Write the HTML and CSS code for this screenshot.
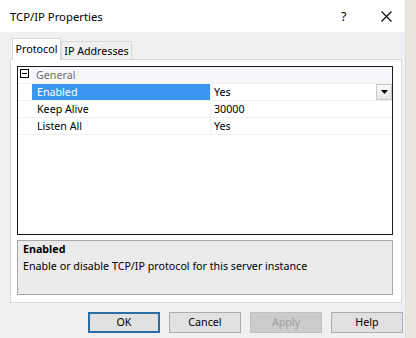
FILE: index.html
```html
<!DOCTYPE html>
<html>

<head>
    <link rel="stylesheet" href="styles.css">
</head>

<body>
    <div class="window">
        <div class="titlebar">
            <span class="title">TCP/IP Properties</span>
            <span class="help-btn">?</span>
            <span class="close-btn">
                <svg width="11" height="11" viewBox="0 0 11 11">
                    <path d="M0.5 0.5 L10.5 10.5 M10.5 0.5 L0.5 10.5" stroke="#000" stroke-width="1.1" fill="none" />
                </svg>
            </span>
        </div>

        <div class="tabs">
            <div class="tab active">Protocol</div>
            <div class="tab">IP Addresses</div>
        </div>

        <div class="panel">
            <div class="grid">
                <div class="row group">
                    <div class="gutter"><span class="toggle"></span></div>
                    <div class="name">General</div>
                    <div class="value"></div>
                </div>
                <div class="row selected">
                    <div class="gutter"></div>
                    <div class="name">Enabled</div>
                    <div class="value">Yes
                        <span class="drop">
                            <svg width="7" height="4" viewBox="0 0 7 4">
                                <path d="M0 0 L7 0 L3.5 4 Z" fill="#000" />
                            </svg>
                        </span>
                    </div>
                </div>
                <div class="row">
                    <div class="gutter"></div>
                    <div class="name">Keep Alive</div>
                    <div class="value">30000</div>
                </div>
                <div class="row">
                    <div class="gutter"></div>
                    <div class="name">Listen All</div>
                    <div class="value">Yes</div>
                </div>
            </div>
            <div class="desc">
                <div class="desc-title">Enabled</div>
                <div class="desc-text">Enable or disable TCP/IP protocol for this server instance</div>
            </div>
        </div>

        <div class="buttons">
            <div class="btn default">OK</div>
            <div class="btn">Cancel</div>
            <div class="btn disabled">Apply</div>
            <div class="btn">Help</div>
        </div>
    </div>
</body>

</html>
```

FILE: styles.css
```css
* {
    padding: 0;
    margin: 0;
    box-sizing: border-box;
}

body {
    background: #e9e6e0;
    font-family: "Noto Sans", "DejaVu Sans", sans-serif;
    font-size: 10.7px;
    color: #000;
}

.window {
    width: 406px;
    height: 338px;
    background: #f0f0f0;
    border-right: 1px solid #dcdcdc;
}

.titlebar {
    height: 32px;
    background: #fff;
    display: flex;
    align-items: center;
    position: relative;
}

.title {
    margin-left: 10px;
    font-size: 11.3px;
}

.help-btn {
    position: absolute;
    left: 341px;
    top: 8px;
    font-size: 12.5px;
}

.close-btn {
    position: absolute;
    left: 381px;
    top: 11px;
    line-height: 0;
}

.tabs {
    display: flex;
    align-items: flex-end;
    height: 27px;
    padding-left: 12px;
    position: relative;
    z-index: 1;
}

.tab {
    height: 18px;
    line-height: 18px;
    border: 1px solid #d9d9d9;
    border-bottom: none;
    background: #f0f0f0;
    width: 71px;
    text-align: center;
    white-space: nowrap;
}

.tab.active {
    width: 49px;
    height: 22px;
    line-height: 20px;
    background: #fff;
    margin-bottom: -1px;
}

.panel {
    margin-left: 10px;
    width: 392px;
    height: 244px;
    border: 1px solid #d9d9d9;
    background: #fff;
    padding: 6px 8px 0 6px;
}

.grid {
    width: 376px;
    height: 169px;
    border: 1px solid #1a1a1a;
    background: #fff;
}

.row {
    display: flex;
    height: 17px;
    line-height: 17px;
    border-bottom: 1px solid #f0f0f0;
}

.gutter {
    width: 14px;
    position: relative;
}

.toggle {
    position: absolute;
    left: 2px;
    top: 2px;
    width: 9px;
    height: 9px;
    border: 1px solid #000;
    background: #fff;
}

.toggle::after {
    content: "";
    position: absolute;
    left: 1px;
    top: 3px;
    width: 5px;
    height: 1px;
    background: #000;
}

.name {
    width: 179px;
    padding-left: 5px;
    border-right: 1px solid #f0f0f0;
}

.value {
    flex: 1;
    padding-left: 3px;
    position: relative;
}

.row.group {
    background: #f5f7fb;
    color: #6d6d6d;
}

.row.group .gutter {
    background: #fff;
}

.row.group .name {
    border-right: none;
    padding-left: 4px;
}

.row.selected .name {
    background: #3c95ee;
    color: #fff;
}

.drop {
    position: absolute;
    right: 0;
    top: 0;
    width: 16px;
    height: 16px;
    background: linear-gradient(#fbfbfb, #e4e4e4);
    border: 1px solid #c8c8c8;
    display: flex;
    align-items: center;
    justify-content: center;
}

.desc {
    margin-top: 5px;
    width: 376px;
    height: 55px;
    border: 1px solid #a9a9a9;
    background: #ebebeb;
    padding: 0 0 0 5px;
    line-height: 17px;
}

.desc-title {
    font-weight: bold;
}

.buttons {
    display: flex;
    gap: 9px;
    padding-left: 88px;
    margin-top: 9px;
}

.btn {
    width: 72px;
    height: 21px;
    line-height: 19px;
    text-align: center;
    background: #e1e1e1;
    border: 1px solid #adadad;
}

.btn.default {
    border: 2px solid #2a6ea5;
    line-height: 17px;
}

.btn.disabled {
    background: #cccccc;
    border-color: #bfbfbf;
    color: #a0a0a0;
}
```
